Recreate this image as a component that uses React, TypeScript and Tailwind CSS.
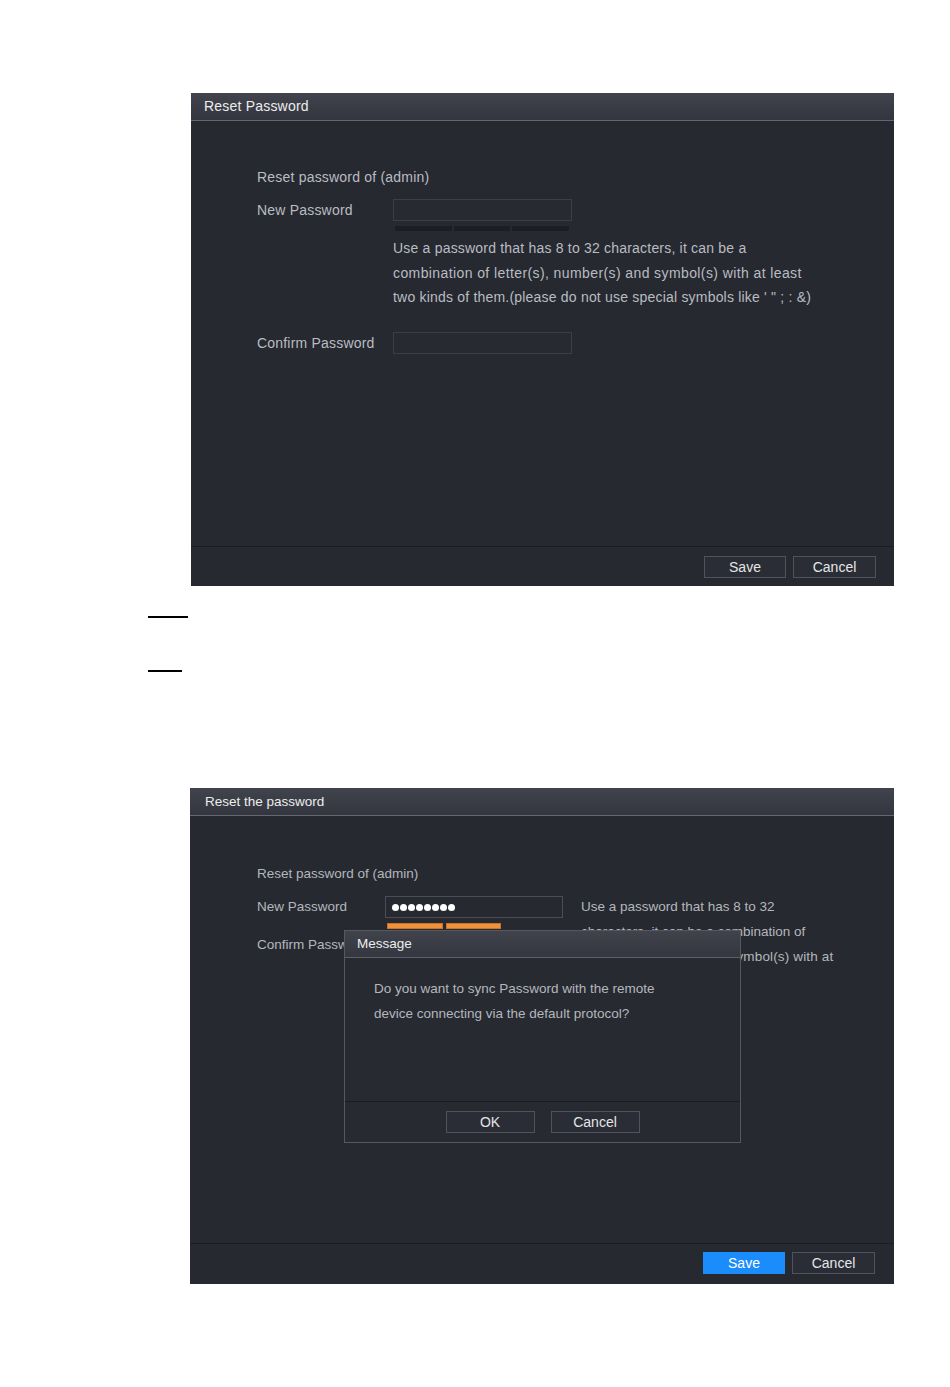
import React from "react";

const font = { fontFamily: '"Liberation Sans", Arial, sans-serif' };

function Btn({ children, w, primary }: { children: React.ReactNode; w: string; primary?: boolean }) {
  return (
    <div
      className={
        "h-[22px] flex items-center justify-center text-[14px] leading-none " +
        w +
        (primary
          ? " bg-[#1a8cfb] text-white border border-[#1a8cfb]"
          : " bg-[#2a2d35] text-[#e4e5e7] border border-[#50535b]")
      }
    >
      {children}
    </div>
  );
}

function Header({ title, size, pl }: { title: string; size: string; pl: string }) {
  return (
    <div
      className={
        "h-[28px] flex items-center bg-gradient-to-b from-[#41444c] to-[#33363e] border-b border-[#666870] text-[#eceded] " +
        size +
        " " +
        pl
      }
    >
      {title}
    </div>
  );
}

function Footer({ primary, ml, h }: { primary?: boolean; ml: string; h: string }) {
  return (
    <div className={"border-t border-[#1a1c21] bg-[#262930] flex items-center " + h}>
      <div className={"flex gap-[7px] " + ml}>
        <Btn w="w-[82px]" primary={primary}>
          Save
        </Btn>
        <Btn w="w-[83px]">Cancel</Btn>
      </div>
    </div>
  );
}

export default function App() {
  return (
    <div className="w-[950px] h-[1387px] bg-white flex flex-col" style={font}>
      {/* Panel 1 */}
      <div className="ml-[191px] mt-[93px] w-[703px] h-[493px] bg-[#262930] flex flex-col">
        <Header title="Reset Password" size="text-[14px] tracking-[0.2px]" pl="pl-[13px]" />
        <div className="flex-1 pl-[66px] pt-[46px] text-[14px] tracking-[0.2px] text-[#b9bcc2]">
          <div className="h-[20px] leading-[20px]">Reset password of (admin)</div>
          <div className="flex mt-[12px]">
            <div className="w-[136px] h-[22px] leading-[22px]">New Password</div>
            <div className="flex flex-col">
              <div className="w-[179px] h-[22px] border border-[#3b3e46] bg-[#272a31]" />
              <div className="flex gap-[2px] mt-[5px] pl-[2px]">
                <div className="w-[57px] h-[5px] bg-[#1c1e23]" />
                <div className="w-[56px] h-[5px] bg-[#1c1e23]" />
                <div className="w-[57px] h-[5px] bg-[#1c1e23]" />
              </div>
              <div className="mt-[5px] leading-[24.5px] whitespace-nowrap">
                <div>Use a password that has 8 to 32 characters, it can be a</div>
                <div className="tracking-[0.4px]">combination of letter(s), number(s) and symbol(s) with at least</div>
                <div>two kinds of them.(please do not use special symbols like ' " ; : &amp;)</div>
              </div>
            </div>
          </div>
          <div className="flex mt-[22px]">
            <div className="w-[136px] h-[22px] leading-[22px]">Confirm Password</div>
            <div className="w-[179px] h-[22px] border border-[#3b3e46] bg-[#272a31]" />
          </div>
        </div>
        <Footer ml="ml-[513px]" h="h-[40px]" />
      </div>

      {/* underline marks */}
      <div className="ml-[148px] mt-[30px] w-[40px] h-[2px] bg-black" />
      <div className="ml-[148px] mt-[52px] w-[34px] h-[2px] bg-black" />

      {/* Panel 2 */}
      <div className="ml-[190px] mt-[116px] w-[704px] h-[496px] bg-[#262930] flex flex-col relative">
        <Header title="Reset the password" size="text-[13.5px] pt-[2px]" pl="pl-[15px]" />
        <div className="flex-1 pl-[67px] pt-[48px] text-[13.5px] text-[#b4b7bd]">
          <div className="h-[20px] leading-[20px]">Reset password of (admin)</div>
          <div className="flex mt-[12px]">
            <div className="w-[128px] h-[22px] leading-[22px]">New Password</div>
            <div className="flex flex-col">
              <div className="w-[178px] h-[22px] border border-[#4a4d55] bg-[#26292f] flex items-center pl-[6px] gap-[1px]">
                {Array.from({ length: 8 }).map((_, i) => (
                  <div key={i} className="w-[7px] h-[7px] rounded-full bg-white" />
                ))}
              </div>
              <div className="flex gap-[3px] mt-[5px] pl-[2px]">
                <div className="w-[56px] h-[6px] bg-[#f0913b] border border-[#c9722a]" />
                <div className="w-[55px] h-[6px] bg-[#f0913b] border border-[#c9722a]" />
              </div>
            </div>
            <div className="ml-[18px] -mt-[2px] leading-[25px] whitespace-nowrap">
              <div>Use a password that has 8 to 32</div>
              <div>characters, it can be a combination of</div>
              <div className="tracking-[0.15px]">letter(s), number(s) and symbol(s) with at</div>
            </div>
          </div>
          <div className="-mt-[34px] h-[20px] leading-[20px]">Confirm Password</div>
        </div>
        <Footer primary ml="ml-[513px]" h="h-[41px] pb-[3px]" />

        {/* Message dialog */}
        <div className="absolute left-[154px] top-[142px] w-[397px] h-[213px] bg-[#272a31] border border-[#55585f] flex flex-col">
          <div className="h-[27px] flex items-center pl-[12px] bg-gradient-to-b from-[#40434b] to-[#34373f] border-b border-[#5d6067] text-[13.5px] text-[#eceded]">
            Message
          </div>
          <div className="flex-1 pl-[29px] pt-[18px] text-[13.5px] leading-[25px] text-[#b4b7bd]">
            <div>Do you want to sync Password with the remote</div>
            <div>device connecting via the default protocol?</div>
          </div>
          <div className="h-[41px] border-t border-[#1a1c21] flex items-center justify-center gap-[16px]">
            <div className="w-[89px] h-[22px] flex items-center justify-center bg-[#2a2d35] border border-[#50535b] text-[14px] text-[#e4e5e7]">
              OK
            </div>
            <div className="w-[89px] h-[22px] flex items-center justify-center bg-[#2a2d35] border border-[#50535b] text-[14px] text-[#e4e5e7]">
              Cancel
            </div>
          </div>
        </div>
      </div>
    </div>
  );
}
